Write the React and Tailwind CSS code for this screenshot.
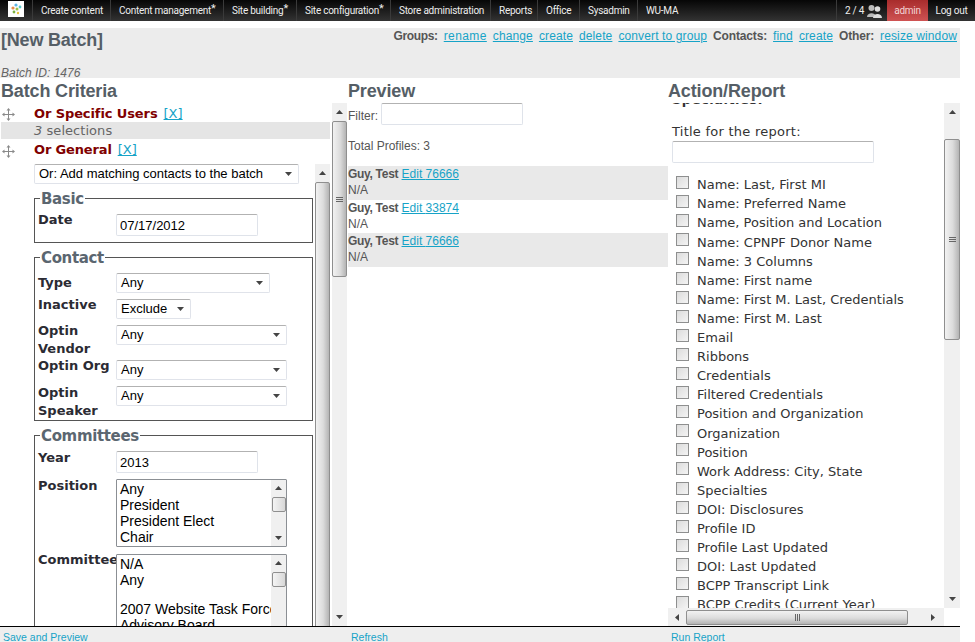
import React from "react";

const nav = [
  ["Create content", "w-[78px]", false],
  ["Content management", "w-[113px]", true],
  ["Site building", "w-[73px]", true],
  ["Site configuration", "w-[94px]", true],
  ["Store administration", "w-[100px]", false],
  ["Reports", "w-[47px]", false],
  ["Office", "w-[42px]", false],
  ["Sysadmin", "w-[58px]", false],
  ["WU-MA", "w-[50px]", false],
];

const reportFields = [
  "Name: Last, First MI", "Name: Preferred Name", "Name, Position and Location", "Name: CPNPF Donor Name",
  "Name: 3 Columns", "Name: First name", "Name: First M. Last, Credentials", "Name: First M. Last", "Email",
  "Ribbons", "Credentials", "Filtered Credentials", "Position and Organization", "Organization", "Position",
  "Work Address: City, State", "Specialties", "DOI: Disclosures", "Profile ID", "Profile Last Updated",
  "DOI: Last Updated", "BCPP Transcript Link", "BCPP Credits (Current Year)",
];

const profiles = [["76666", true], ["33874", false], ["76666", true]];

const sans = "font-['Liberation_Sans',Arial,sans-serif]";
const dv = "font-['DejaVu_Sans',Verdana,sans-serif]";

function Tri({ dir = "up" }) {
  const pts = { up: "0,4 7,4 3.5,0", down: "0,0 7,0 3.5,4", left: "4,0 4,7 0,3.5", right: "0,0 0,7 4,3.5" }[dir];
  const horizontal = dir === "left" || dir === "right";
  return (
    <svg width={horizontal ? 4 : 7} height={horizontal ? 7 : 4} className="block">
      <polygon points={pts} fill="#444" />
    </svg>
  );
}

function Grip({ horizontal }) {
  return horizontal ? (
    <span className="flex gap-[1px]">
      <i className="block w-[1px] h-[7px] bg-[#666]" /><i className="block w-[1px] h-[7px] bg-[#666]" /><i className="block w-[1px] h-[7px] bg-[#666]" />
    </span>
  ) : (
    <span className="flex flex-col gap-[1px]">
      <i className="block w-[7px] h-[1px] bg-[#666]" /><i className="block w-[7px] h-[1px] bg-[#666]" /><i className="block w-[7px] h-[1px] bg-[#666]" />
    </span>
  );
}

const vThumb = "flex items-center justify-center rounded-[2px] border border-[#8f8f8f] bg-[linear-gradient(90deg,#f2f2f2,#dcdcdc_55%,#b4b4b4)]";

function VBar({ thumbClass, continuous = false, className = "" }) {
  return (
    <div className={`flex flex-col items-stretch bg-[#f0f0f0] ${className}`}>
      <div className="h-[18px] shrink-0 flex items-center justify-center"><Tri /></div>
      <div className={`${vThumb} ${thumbClass} shrink-0`}>{!continuous && <Grip />}</div>
      {!continuous && <div className="flex-1" />}
      {!continuous && <div className="h-[18px] shrink-0 flex items-center justify-center"><Tri dir="down" /></div>}
    </div>
  );
}

function Select({ value, w, h = "h-[20px]", pad = "pl-[4px] pr-[6px]" }) {
  return (
    <div className={`${w} ${h} ${pad} shrink-0 flex items-center justify-between rounded-[2px] border border-[#e0e3ea] border-t-[#b2b2b2] bg-white ${sans} text-[13px] text-black`}>
      <span>{value}</span>
      <Tri dir="down" />
    </div>
  );
}

function TextBox({ value = "", w, h = "h-[22px]" }) {
  return (
    <input
      readOnly
      value={value}
      className={`${w} ${h} shrink-0 px-[3px] rounded-[2px] border border-[#dfe3ea] border-t-[#b2b2b2] bg-white ${sans} text-[13px] text-black outline-none`}
    />
  );
}

function Row({ label, h, labelClass = "-mt-[3px]", children }) {
  return (
    <div className={`flex items-start ${h}`}>
      <div className={`w-[78px] shrink-0 ${labelClass} ${dv} text-[13px] font-bold leading-[18px] text-[#2b2b33] whitespace-nowrap`}>{label}</div>
      <div className="relative z-10">{children}</div>
    </div>
  );
}

function Group({ title, className, children }) {
  return (
    <fieldset className={`border border-[#555] pl-[3px] pt-[7px] ${className}`}>
      <legend className={`ml-[2px] px-[1px] ${dv} text-[15px] font-bold leading-[18px] tracking-[-0.35px] text-[#5b6670]`}>
        <span className="block translate-y-[1px]">{title}</span>
      </legend>
      {children}
    </fieldset>
  );
}

function ListBox({ items, h, clip = false }) {
  return (
    <div className={`w-[171px] ${h} flex border border-[#8b8f94] rounded-[1px] bg-white overflow-hidden`}>
      <div className={`w-[154px] pl-[3px] pt-[1px] ${sans} text-[14px] leading-[16px] text-black whitespace-nowrap overflow-hidden`}>
        {items.map((it, i) => <div key={i} className={it ? "h-[16px]" : "h-[13px]"}>{it}</div>)}
      </div>
      <div className="w-[15px] bg-[#f0f0f0] flex flex-col items-center">
        <div className="h-[16px] flex items-center justify-center"><Tri /></div>
        <div className="w-[14px] h-[15px] mt-[1px] rounded-[2px] border border-[#8f8f8f] bg-[linear-gradient(90deg,#f4f4f4,#d8d8d8)]" />
        <div className="flex-1" />
        {!clip && <div className="h-[16px] flex items-center justify-center"><Tri dir="down" /></div>}
      </div>
    </div>
  );
}

function MoveHandle() {
  return (
    <svg width="13" height="13" viewBox="0 0 13 13" className="block" fill="#8a8a8a">
      <rect x="6" y="2" width="1" height="9" /><rect x="2" y="6" width="9" height="1" />
      <polygon points="6.5,0 4.5,2.5 8.5,2.5" /><polygon points="6.5,13 4.5,10.5 8.5,10.5" />
      <polygon points="0,6.5 2.5,4.5 2.5,8.5" /><polygon points="13,6.5 10.5,4.5 10.5,8.5" />
    </svg>
  );
}

function Link({ children, className = "" }) {
  return <a href="#" className={`underline text-[#16a3c7] ${className}`}>{children}</a>;
}

export default function App() {
  return (
    <div className={`w-[975px] h-[642px] overflow-hidden bg-white ${sans} text-[12px] text-[#555]`}>
      {/* Admin toolbar */}
      <div className="h-[21px] flex items-stretch bg-[linear-gradient(180deg,#060606,#333)] font-['Roboto',sans-serif] text-[10px] tracking-[-0.25px] text-[#eee]">
        <div className="w-[32px] flex pl-[8px] pt-[1px]">
          <svg width="16" height="16" viewBox="0 0 16 16" className="block bg-white">
            <circle cx="8" cy="4" r="1.6" fill="#5fb6e6" /><circle cx="12" cy="6" r="1.4" fill="#58c7c9" />
            <circle cx="5" cy="7" r="1.6" fill="#e88d4a" /><circle cx="9" cy="8" r="1.5" fill="#9cc24a" />
            <circle cx="6" cy="11" r="1.4" fill="#7cb342" /><circle cx="10" cy="12" r="1.2" fill="#e9c23f" />
          </svg>
        </div>
        {nav.map(([t, w, star]) => (
          <div key={t} className={`${w} border-l border-[#3a3a3a] pl-[8px] flex items-center whitespace-nowrap`}>
            {t}{star && <span className="relative -top-[2px] text-[11px] leading-none">*</span>}
          </div>
        ))}
        <div className="flex-1" />
        <div className="w-[51px] border-l border-[#3a3a3a] pl-[8px] flex items-center gap-[3px]">
          <span>2 / 4</span>
          <svg width="15" height="14" viewBox="0 0 15 14" fill="#bbb" className="block">
            <circle cx="4.5" cy="4" r="3" /><path d="M0 13 C0 8 9 8 9 13 Z" />
            <circle cx="10.5" cy="5" r="2.8" fill="#ddd" /><path d="M6 14 C6 8.500 15 8.500 15 14 Z" fill="#ddd" />
          </svg>
        </div>
        <div className="w-[41px] flex items-center justify-center bg-[linear-gradient(180deg,#a82c2c,#cf5353)] text-[#f3d5d5]">admin</div>
        <div className="flex-1 max-w-[47px] flex items-center justify-center">Log out</div>
      </div>

      <div className="w-[960px] mt-[7px]">
        {/* Title band */}
        <div className="relative h-[50px] bg-[#ececec] overflow-hidden">
          <div className="flex justify-between pl-[1px] pr-[3px]">
            <h1 className="pt-[1px] text-[18px] leading-[22px] font-bold tracking-[-0.2px] text-[#555e66]">[New Batch]</h1>
            <div className="flex gap-[6px] pt-[1px] text-[12px] leading-[14px] whitespace-nowrap tracking-[0.12px]">
              <b className="tracking-[-0.35px]">Groups:</b>
              <Link className="tracking-[0.4px]">rename</Link><Link>change</Link><Link>create</Link><Link>delete</Link><Link>convert to group</Link>
              <b className="tracking-[-0.15px]">Contacts:</b>
              <Link>find</Link><Link>create</Link>
              <b className="tracking-[-0.15px]">Other:</b>
              <Link>resize window</Link>
            </div>
          </div>
          <div className="absolute left-[1px] bottom-[-2px] italic text-[12px] leading-[14px] text-[#666]">Batch ID: 1476</div>
        </div>

        {/* Column headings */}
        <div className="h-[25px] flex text-[18px] leading-[26px] font-bold tracking-[-0.15px] text-[#555e66]">
          <div className="w-[348px] pl-[1px]">Batch Criteria</div>
          <div className="w-[320px]">Preview</div>
          <div>Action/Report</div>
        </div>

        {/* Columns */}
        <div className="h-[523px] flex">
          {/* Criteria */}
          <div className="w-[332px] overflow-hidden flex flex-col">
            <div className="h-[18px] flex items-center mt-[2px]">
              <div className="w-[34px] pl-[2px]"><MoveHandle /></div>
              <span className={`${dv} text-[13px] font-bold tracking-[-0.1px] text-[#800000]`}>Or Specific Users</span>
              <Link className={`${dv} text-[13px] ml-[6px]`}>[X]</Link>
            </div>
            <div className={`-mt-[1px] ml-[1px] mr-[2px] h-[17px] pl-[33px] bg-[#e5e5e5] ${dv} text-[13px] leading-[17px] tracking-[0.05px] text-[#666]`}>
              <i>3</i> selections
            </div>
            <div className="h-[25px] flex items-center pb-[3px]">
              <div className="w-[34px] pl-[2px] pt-[3px]"><MoveHandle /></div>
              <span className={`${dv} text-[13px] font-bold tracking-[-0.15px] text-[#800000]`}>Or General</span>
              <Link className={`${dv} text-[13px] ml-[6px]`}>[X]</Link>
            </div>
            <div className="flex-1 min-h-0 flex">
              <div className="w-[315px] pl-[34px] overflow-hidden">
                <Select value="Or: Add matching contacts to the batch" w="w-[265px]" />
                <Group title="Basic" className="w-[279px] h-[54px] mt-[5px]">
                  <Row label="Date" h="h-[30px]"><TextBox value="07/17/2012" w="w-[142px]" /></Row>
                </Group>
                <Group title="Contact" className="w-[279px] h-[173px] mt-[5px]">
                  <Row label="Type" labelClass="mt-[1px]" h="h-[26px]"><Select value="Any" w="w-[154px]" /></Row>
                  <Row label="Inactive" h="h-[26px]"><Select value="Exclude" w="w-[75px]" /></Row>
                  <Row label={<>Optin<br />Vendor</>} h="h-[35px]"><Select value="Any" w="w-[171px]" /></Row>
                  <Row label="Optin Org" h="h-[26px]"><Select value="Any" w="w-[171px]" /></Row>
                  <Row label={<>Optin<br />Speaker</>} labelClass="-mt-[2px]" h="h-[34px]"><Select value="Any" w="w-[171px]" /></Row>
                </Group>
                <Group title="Committees" className="w-[279px] h-[260px] mt-[5px]">
                  <Row label="Year" labelClass="-mt-[2px]" h="h-[28px]"><TextBox value="2013" w="w-[142px]" /></Row>
                  <Row label="Position" labelClass="-mt-[2px]" h="h-[75px]">
                    <ListBox h="h-[68px]" items={["Any", "President", "President Elect", "Chair"]} />
                  </Row>
                  <Row label="Committee" h="h-[100px]">
                    <ListBox h="h-[100px]" clip items={["N/A", "Any", "", "2007 Website Task Force", "Advisory Board", "Annual Meeting"]} />
                  </Row>
                </Group>
              </div>
              <VBar className="w-[15px]" thumbClass="flex-1 -mb-[3px]" continuous />
            </div>
          </div>
          <VBar className="w-[15px]" thumbClass="h-[156px]" />

          {/* Preview */}
          <div className="w-[321px] pl-[1px] text-[12px] leading-[16px]">
            <div className="h-[22px] flex items-center gap-[3px]">
              <span className="pt-[3px]">Filter:</span><TextBox w="w-[142px]" />
            </div>
            <div className="h-[41px] flex items-center">Total Profiles: 3</div>
            {profiles.map(([id, shade], i) => (
              <div key={i} className={`h-[33.500px] ${shade ? "bg-[#e9e9e9]" : ""}`}>
                <b className="tracking-[-0.3px]">Guy, Test</b> <Link>Edit {id}</Link>
                <div>N/A</div>
              </div>
            ))}
          </div>

          {/* Action / Report */}
          <div className="w-[292px] flex flex-col">
            <div className="flex-1 min-h-0 flex">
              <div className={`w-[276px] overflow-hidden ${dv} text-[13px] text-[#333]`}>
                <div className="pl-[4px] -mt-[11px] h-[20px] font-bold leading-[16px] tracking-[0.5px]">Specialties:</div>
                <div className="pl-[4px] mt-[11px] h-[18px] leading-[18px] tracking-[0.25px]">Title for the report:</div>
                <div className="pl-[4px]"><TextBox w="w-[202px]" /></div>
                <div className="mt-[12.500px] pl-[8px]">
                  {reportFields.map((f) => (
                    <div key={f} className="h-[19.100px] flex items-center gap-[8px] whitespace-nowrap">
                      <input
                        type="checkbox"
                        readOnly
                        tabIndex={-1}
                        className="appearance-none block w-[13px] h-[13px] -mt-[5px] shrink-0 border border-[#8e8f8f] bg-[linear-gradient(135deg,#dcdcdc,#f4f4f4)]"
                      />
                      <span>{f}</span>
                    </div>
                  ))}
                </div>
              </div>
              <div className="w-[16px] flex flex-col bg-[#f0f0f0]">
                <div className="h-[18px] flex items-center justify-center"><Tri /></div>
                <div className={`${vThumb} h-[201px] mt-[18px] shrink-0`}><Grip /></div>
                <div className="flex-1" />
                <div className="h-[18px] flex items-center justify-center"><Tri dir="down" /></div>
              </div>
            </div>
            <div className="h-[18px] mr-[16px] flex items-center bg-[#f0f0f0]">
              <div className="w-[18px] flex justify-center"><Tri dir="left" /></div>
              <div className="flex-1 h-[15px] flex items-center justify-center rounded-[2px] border border-[#8f8f8f] bg-[linear-gradient(180deg,#f2f2f2,#dcdcdc_55%,#b4b4b4)]"><Grip horizontal /></div>
              <div className="w-[36px] flex justify-end pr-[9px]"><Tri dir="right" /></div>
            </div>
          </div>
        </div>

        {/* Footer actions */}
        <div className="h-[16px] border-t border-black bg-[#eee] flex text-[10.500px] leading-[21px] text-[#16a3c7]">
          <a href="#" className="w-[351px] pl-[3px]">Save and Preview</a>
          <a href="#" className="w-[320px]">Refresh</a>
          <a href="#">Run Report</a>
        </div>
      </div>
    </div>
  );
}
